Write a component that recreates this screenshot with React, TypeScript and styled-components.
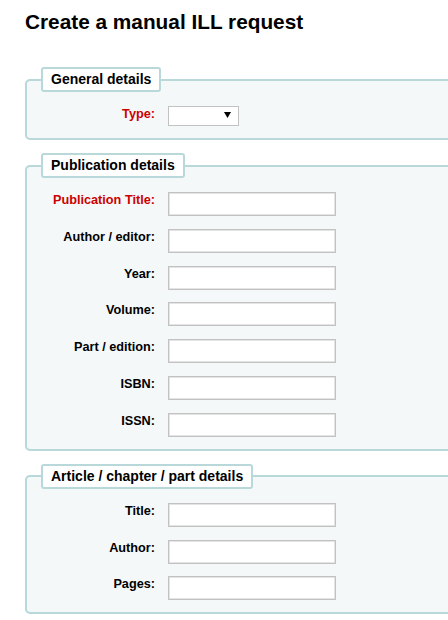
import React from "react";
import styled, { createGlobalStyle } from "styled-components";

const Global = createGlobalStyle`
  html, body { margin: 0; padding: 0; background: #fff; overflow: hidden; }
  body { font-family: "Liberation Sans", Arial, sans-serif; color: #000; }
`;

const Page = styled.div`
  padding: 0 0 0 25px;
  width: 448px;
  box-sizing: border-box;
  overflow: hidden;
`;

const Title = styled.h1`
  margin: 10px 0 33px;
  font-size: 20.8px;
  line-height: 24px;
  font-weight: bold;
  color: #000;
`;

const Fieldset = styled.fieldset`
  margin: 0 -60px 13px 0;
  padding: 14px 14px 12px;
  background: #f4f8f9;
  border: 2px solid #b9d8d9;
  border-radius: 5px;
  display: flex;
  flex-direction: column;
  gap: 12.8px;
`;

const Legend = styled.legend`
  padding: 2px 8px 2px 8px;
  margin: 0;
  background: #fff;
  border: 2px solid #b9d8d9;
  border-radius: 3px;
  font-size: 14px;
  line-height: 17px;
  font-weight: bold;
  color: #000;
`;

const Row = styled.div`
  display: flex;
  align-items: flex-start;
  gap: 13px;
`;

const Label = styled.label<{ $required?: boolean }>`
  width: 114px;
  text-align: right;
  font-size: 12.7px;
  line-height: 16px;
  font-weight: bold;
  color: ${(p) => (p.$required ? "#cc0000" : "#000")};
  flex-shrink: 0;
`;

const Input = styled.input`
  box-sizing: border-box;
  width: 168px;
  height: 24px;
  margin: 0;
  padding: 2px 4px;
  background: #fff;
  border: 1px solid #c2c2c2;
  box-shadow: inset 0 0 0 1px #e4e4e4;
  font-family: "Liberation Sans", Arial, sans-serif;
  font-size: 13px;
  outline: none;
`;

const SelectWrap = styled.div`
  position: relative;
  width: 71px;
  height: 20px;
`;

const Select = styled.select`
  box-sizing: border-box;
  appearance: none;
  -webkit-appearance: none;
  width: 71px;
  height: 20px;
  margin: 0;
  padding: 0 4px;
  background: #fff;
  border: 1px solid #c2c2c2;
  border-radius: 0;
  font-family: "Liberation Sans", Arial, sans-serif;
  font-size: 13px;
`;

const Arrow = styled.svg`
  position: absolute;
  right: 8px;
  top: 6px;
  pointer-events: none;
`;

type Field = { label: string; required?: boolean };

const Section: React.FC<{ title: string; fields: Field[] }> = ({ title, fields }) => (
  <Fieldset>
    <Legend>{title}</Legend>
    {fields.map((f) => (
      <Row key={f.label}>
        <Label $required={f.required}>{f.label}:</Label>
        <Input type="text" />
      </Row>
    ))}
  </Fieldset>
);

export default function App() {
  return (
    <Page>
      <Global />
      <Title>Create a manual ILL request</Title>
      <Fieldset>
        <Legend>General details</Legend>
        <Row>
          <Label $required>Type:</Label>
          <SelectWrap>
            <Select defaultValue="">
              <option value=""></option>
            </Select>
            <Arrow width="7" height="6" viewBox="0 0 7 6">
              <path d="M0 0 H7 L3.5 6 Z" fill="#000" />
            </Arrow>
          </SelectWrap>
        </Row>
      </Fieldset>
      <Section
        title="Publication details"
        fields={[
          { label: "Publication Title", required: true },
          { label: "Author / editor" },
          { label: "Year" },
          { label: "Volume" },
          { label: "Part / edition" },
          { label: "ISBN" },
          { label: "ISSN" },
        ]}
      />
      <Section
        title="Article / chapter / part details"
        fields={[{ label: "Title" }, { label: "Author" }, { label: "Pages" }]}
      />
    </Page>
  );
}
